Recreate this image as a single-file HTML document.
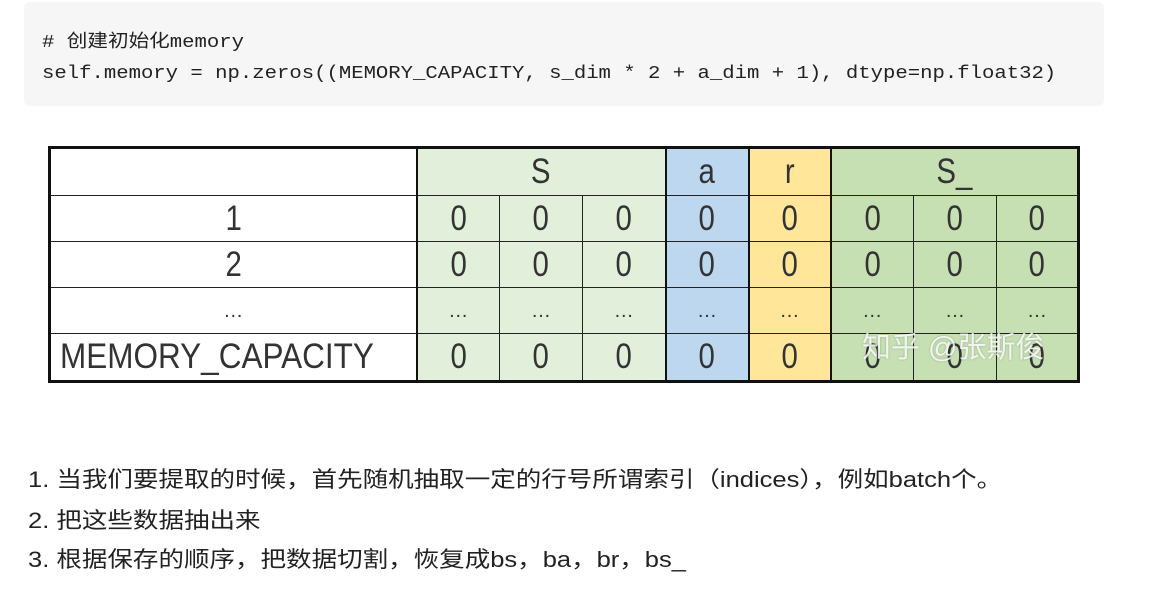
<!DOCTYPE html>
<html><head><meta charset="utf-8"><style>
body{margin:0;width:1157px;height:594px;background:#fff;position:relative;overflow:hidden;font-family:"Liberation Sans","Noto Sans CJK SC",sans-serif}
.code{position:absolute;left:24px;top:2px;width:1080px;height:104px;background:#f6f6f6;border-radius:6px}
.code div{position:absolute;left:18px;font-family:"Liberation Mono","Noto Sans CJK SC",monospace;font-size:18px;color:#222;white-space:pre;transform:scaleX(1.145);transform-origin:left}
table{position:absolute;left:48px;top:146px;border-collapse:collapse;border:3px solid #111;table-layout:fixed;width:1031px}
td{border:1px solid #222;padding:0;text-align:center;font-size:35px;color:#333;height:45px;line-height:40px;white-space:nowrap;overflow:visible}
td span{display:inline-block;transform:scaleX(.84)}
.g{background:#e2efda}.b{background:#bdd7ee}.y{background:#ffe699}.d{background:#c6e0b4}
.tl{border-right:2.5px solid #111}
td.dots{font-size:20px;line-height:20px}
.list{position:absolute;left:28px;font-size:22px;color:#222;white-space:nowrap;transform:scaleX(1.16);transform-origin:left}
.wm{position:absolute;left:862px;top:324px;font-size:29px;color:rgba(255,255,255,.85);text-shadow:0 0 2px rgba(0,0,0,.25)}
</style></head><body>
<div class="code"><div style="top:25px"># 创建初始化memory</div><div style="top:62px">self.memory = np.zeros((MEMORY_CAPACITY, s_dim * 2 + a_dim + 1), dtype=np.float32)</div></div>
<table>
<colgroup><col style="width:367px"><col style="width:83px"><col style="width:83px"><col style="width:83px"><col style="width:83px"><col style="width:82px"><col style="width:83px"><col style="width:83px"><col style="width:82px"></colgroup>
<tr><td class="tl" style="height:46px"></td><td class="g" colspan="3" style="border-right:2px solid #111"><span>S</span></td><td class="b" style="border-right:2px solid #111"><span>a</span></td><td class="y" style="border-right:2px solid #111"><span>r</span></td><td class="d" colspan="3"><span>S_</span></td></tr>
<tr><td class="tl"><span>1</span></td><td class="g"><span>0</span></td><td class="g"><span>0</span></td><td class="g" style="border-right:2px solid #111"><span>0</span></td><td class="b" style="border-right:2px solid #111"><span>0</span></td><td class="y" style="border-right:2px solid #111"><span>0</span></td><td class="d"><span>0</span></td><td class="d"><span>0</span></td><td class="d"><span>0</span></td></tr>
<tr><td class="tl"><span>2</span></td><td class="g"><span>0</span></td><td class="g"><span>0</span></td><td class="g" style="border-right:2px solid #111"><span>0</span></td><td class="b" style="border-right:2px solid #111"><span>0</span></td><td class="y" style="border-right:2px solid #111"><span>0</span></td><td class="d"><span>0</span></td><td class="d"><span>0</span></td><td class="d"><span>0</span></td></tr>
<tr><td class="tl dots">…</td><td class="g dots">…</td><td class="g dots">…</td><td class="g dots" style="border-right:2px solid #111">…</td><td class="b dots" style="border-right:2px solid #111">…</td><td class="y dots" style="border-right:2px solid #111">…</td><td class="d dots">…</td><td class="d dots">…</td><td class="d dots">…</td></tr>
<tr><td class="tl" style="text-align:left;height:46px"><span style="transform-origin:left;margin-left:9px;transform:scaleX(.9)">MEMORY_CAPACITY</span></td><td class="g"><span>0</span></td><td class="g"><span>0</span></td><td class="g" style="border-right:2px solid #111"><span>0</span></td><td class="b" style="border-right:2px solid #111"><span>0</span></td><td class="y" style="border-right:2px solid #111"><span>0</span></td><td class="d"><span>0</span></td><td class="d"><span>0</span></td><td class="d"><span>0</span></td></tr>
</table>
<div class="wm">知乎 @张斯俊</div>
<div class="list" style="top:462px">1. 当我们要提取的时候，首先随机抽取一定的行号所谓索引（indices），例如batch个。</div>
<div class="list" style="top:503px">2. 把这些数据抽出来</div>
<div class="list" style="top:542px">3. 根据保存的顺序，把数据切割，恢复成bs，ba，br，bs_</div>
</body></html>
